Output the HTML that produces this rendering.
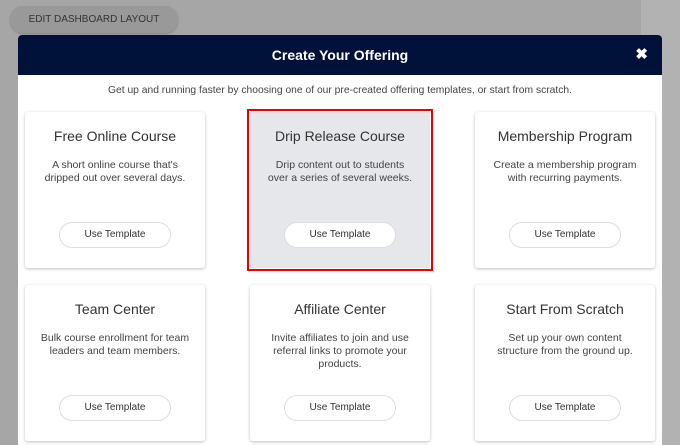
<html><head><style>
html,body{margin:0;width:680px;height:445px;overflow:hidden}
body{background:#a6a6a6;font-family:"Liberation Sans",sans-serif;position:relative}
.strip{position:absolute;left:641px;top:0;width:39px;height:445px;background:#b2b2b2}
.edit{position:absolute;left:10px;top:6px;width:168px;height:27px;border-radius:13px;background:#999;color:#333;font-size:10px;line-height:27px;text-align:center;box-shadow:0 1px 2px rgba(0,0,0,.2)}
.modal{position:absolute;left:18px;top:35px;width:644px;height:410px;background:#fff;border-radius:4px 4px 0 0;overflow:hidden}
.hdr{height:40px;background:#00123a;color:#fff;font-weight:bold;font-size:14px;line-height:40px;text-align:center;position:relative}
.x{position:absolute;right:14px;top:0;font-size:15px}
.sub{text-align:center;font-size:10.3px;color:#444;margin-top:10px}
.card{position:absolute;width:180px;height:156px;background:#fff;border-radius:3px;box-shadow:0 1px 3px rgba(0,0,0,.25);text-align:center;color:#444}
.card h3{margin:16px 0 0;font-weight:normal;font-size:14px;color:#333}
.card p{margin:15px 16px 0;font-size:10.5px;line-height:13px}
.btn{position:absolute;left:34px;top:110px;width:110px;height:24px;border:1px solid #ddd;border-radius:13px;background:#fff;font-size:10px;line-height:24px;color:#333}
.sel{background:#e6e7eb;outline:2px solid #e00;outline-offset:1px;box-shadow:none;border-radius:0}
</style></head><body>
<div class="strip"></div>
<div class="edit">EDIT DASHBOARD LAYOUT</div>
<div class="modal">
<div class="hdr">Create Your Offering<span class="x">✖</span></div>
<div class="sub">Get up and running faster by choosing one of our pre-created offering templates, or start from scratch.</div>
<div class="card" style="left:7px;top:77px"><h3>Free Online Course</h3><p>A short online course that's dripped out over several days.</p><div class="btn">Use Template</div></div>
<div class="card sel" style="left:232px;top:77px"><h3>Drip Release Course</h3><p>Drip content out to students over a series of several weeks.</p><div class="btn">Use Template</div></div>
<div class="card" style="left:457px;top:77px"><h3>Membership Program</h3><p>Create a membership program with recurring payments.</p><div class="btn">Use Template</div></div>
<div class="card" style="left:7px;top:250px"><h3>Team Center</h3><p style="margin-left:8px;margin-right:8px">Bulk course enrollment for team leaders and team members.</p><div class="btn">Use Template</div></div>
<div class="card" style="left:232px;top:250px"><h3>Affiliate Center</h3><p>Invite affiliates to join and use referral links to promote your products.</p><div class="btn">Use Template</div></div>
<div class="card" style="left:457px;top:250px"><h3>Start From Scratch</h3><p>Set up your own content structure from the ground up.</p><div class="btn">Use Template</div></div>
</div>
</body></html>
